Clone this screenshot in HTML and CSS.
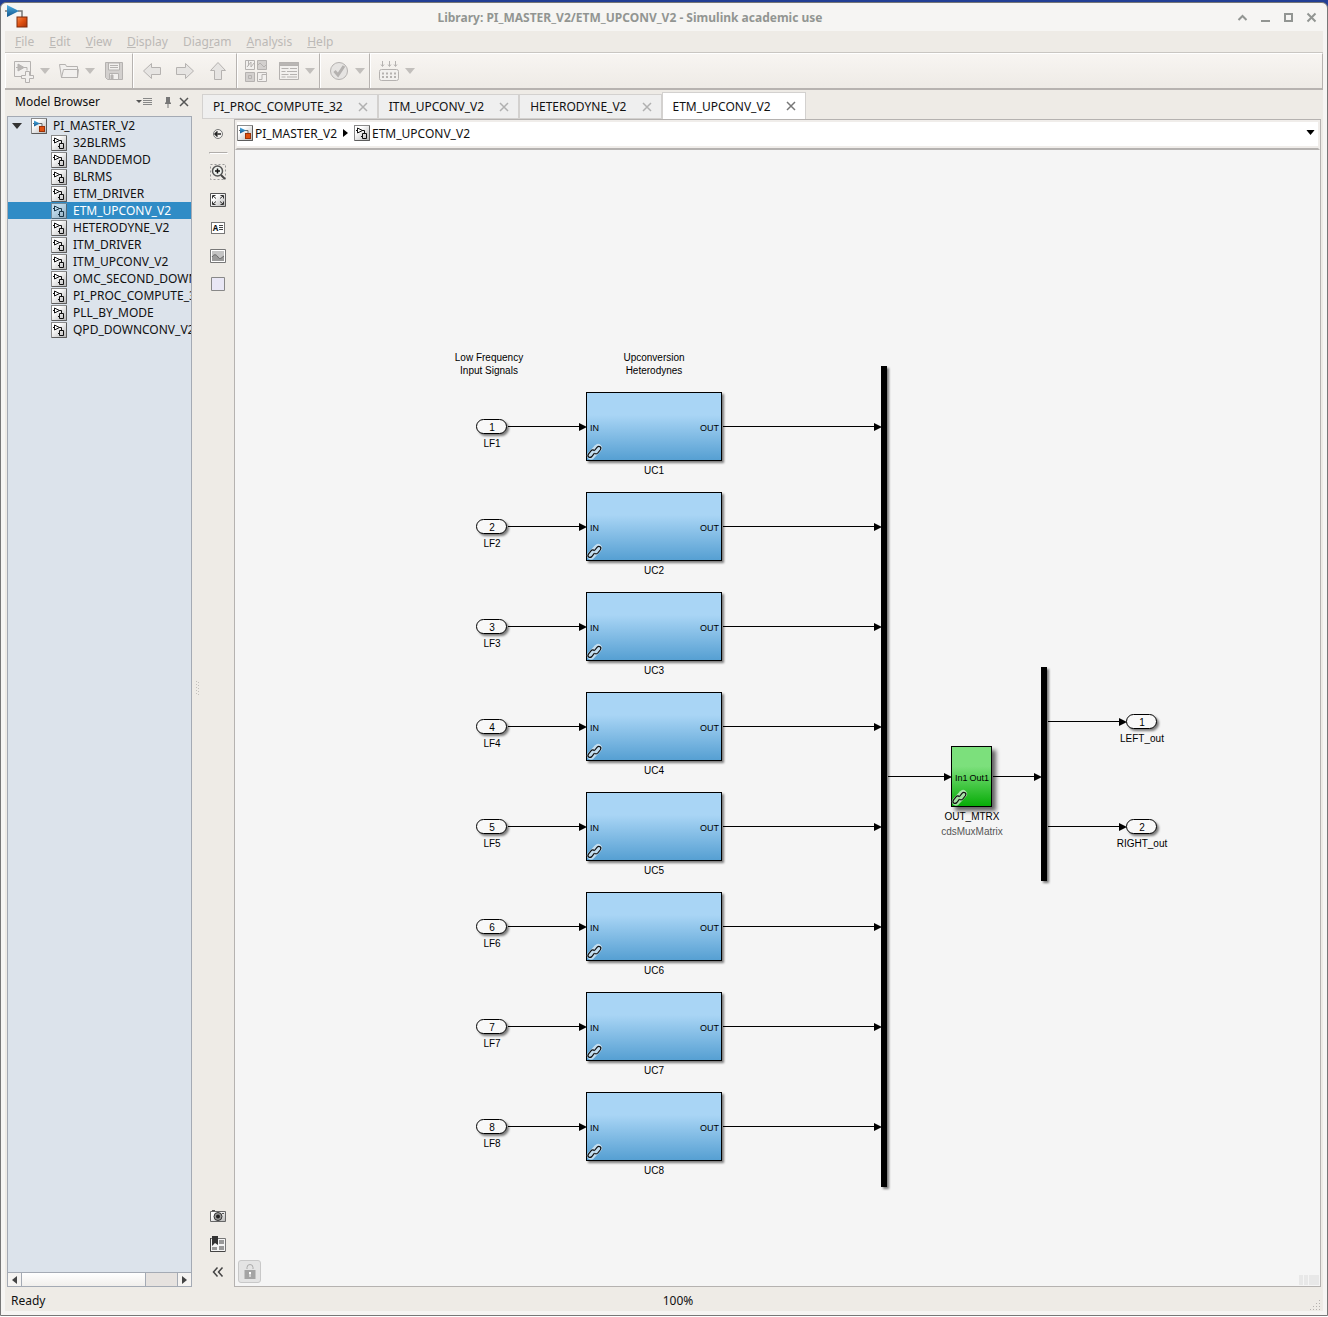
FILE: index.html
```html
<!DOCTYPE html>
<html lang="en">
<head>
    <meta charset="UTF-8">
    <meta name="viewport" content="width=device-width, initial-scale=1.0">
    <title>Library: PI_MASTER_V2/ETM_UPCONV_V2 - Simulink academic use</title>
    <link rel="stylesheet" href="styles.css">
</head>
<body>

    <!-- Shared icons -->
    <svg class="sprite" width="0" height="0" aria-hidden="true">
        <defs>
            <linearGradient id="tileFill" x1="0" y1="0" x2="1" y2="1">
                <stop offset="0.3" stop-color="#ffffff"/>
                <stop offset="1" stop-color="#b4b4b4"/>
            </linearGradient>
            <linearGradient id="orangeFill" x1="0" y1="0" x2="1" y2="1">
                <stop offset="0" stop-color="#f58a4a"/>
                <stop offset="0.5" stop-color="#e0500f"/>
                <stop offset="1" stop-color="#a83208"/>
            </linearGradient>
            <linearGradient id="triFill" x1="0" y1="0" x2="0" y2="1">
                <stop offset="0" stop-color="#4fb0e6"/>
                <stop offset="1" stop-color="#10558c"/>
            </linearGradient>
            <symbol id="modelIcon" viewBox="0 0 16 16">
                <rect x="0.5" y="0.5" width="15" height="15" fill="url(#tileFill)" stroke="#8a8a8a"/>
                <path d="M15.5 1v14.500H1" fill="none" stroke="#5c5c5c"/>
                <path d="M2 5.500h2M8 5.500h3v3" fill="none" stroke="#666"/>
                <path d="M3 2.500v6l6-3z" fill="url(#triFill)"/>
                <rect x="8.500" y="8.500" width="5" height="5" fill="#e0500f" stroke="#9a3208"/>
            </symbol>
            <symbol id="subsystemIcon" viewBox="0 0 16 16">
                <rect x="0.5" y="0.5" width="15" height="15" fill="url(#tileFill)" stroke="#8a8a8a"/>
                <path d="M15.5 1v14.500H1" fill="none" stroke="#5c5c5c"/>
                <path d="M2 5.500h2M8 5.500h2.500v3M3.500 3v5l5-2.500zM7 11.500h1.500M8.500 8.500h4v5h-4z" fill="none" stroke="#111"/>
            </symbol>
            <symbol id="closeIcon" viewBox="0 0 10 10">
                <path d="M1 1l8 8M9 1l-8 8" fill="none" stroke="currentColor" stroke-width="1.500"/>
            </symbol>
            <symbol id="downIcon" viewBox="0 0 10 6">
                <path d="M0 0h10l-5 6z" fill="currentColor"/>
            </symbol>
        </defs>
    </svg>

    <div class="window">
        <header class="titlebar">
            <svg class="app-icon" width="24" height="26" viewBox="0 0 24 26" aria-hidden="true">
                <path d="M0 7h3M13 7h4v7" fill="none" stroke="#777" stroke-width="1.500"/>
                <path d="M2 1v12l12-6z" fill="url(#triFill)"/>
                <rect x="12" y="13" width="10" height="10" fill="url(#orangeFill)" stroke="#7d2a0a"/>
            </svg>
            <h1>Library: PI_MASTER_V2/ETM_UPCONV_V2 - Simulink academic use</h1>
            <div class="window-buttons">
                <button type="button" aria-label="Shade"><svg width="11" height="11" viewBox="0 0 11 11"><path d="M1.500 8l4-4 4 4" /></svg></button>
                <button type="button" aria-label="Minimize"><svg width="11" height="11" viewBox="0 0 11 11"><path d="M1 9h9" /></svg></button>
                <button type="button" aria-label="Maximize"><svg width="11" height="11" viewBox="0 0 11 11"><path d="M2 2h7v7h-7z" /></svg></button>
                <button type="button" aria-label="Close"><svg width="11" height="11" viewBox="0 0 11 11"><path d="M1.500 1.500l8 8M9.500 1.500l-8 8" /></svg></button>
            </div>
        </header>

        <nav class="menubar">
            <a href="#"><u>F</u>ile</a>
            <a href="#"><u>E</u>dit</a>
            <a href="#"><u>V</u>iew</a>
            <a href="#"><u>D</u>isplay</a>
            <a href="#">Diag<u>r</u>am</a>
            <a href="#"><u>A</u>nalysis</a>
            <a href="#"><u>H</u>elp</a>
        </nav>

        <div class="toolbar">
            <div class="tool-group">
                <div class="split">
                    <button type="button" class="tool" aria-label="New model">
                        <svg width="24" height="24" viewBox="0 0 24 24"><path class="soft" d="M2.500 2.500h16v15h-16z"/><path d="M4 8.500h2M12 8.500h3v3"/><path class="dark" d="M6 5v7l6-3.500z"/><path class="soft" d="M13.500 12.500h4v4h4v3h-4v4h-4v-4h-4v-3h4z"/></svg>
                    </button>
                    <button type="button" class="arrow" aria-label="New options"><svg width="10" height="6"><use href="#downIcon"/></svg></button>
                </div>
                <div class="split">
                    <button type="button" class="tool" aria-label="Open">
                        <svg width="24" height="24" viewBox="0 0 24 24"><path class="soft" d="M4.500 18.500l-2-13h6l1 2h11v11zM4.500 18.500l2-8h15l-1 8z"/></svg>
                    </button>
                    <button type="button" class="arrow" aria-label="Open options"><svg width="10" height="6"><use href="#downIcon"/></svg></button>
                </div>
                <button type="button" class="tool" aria-label="Save">
                    <svg width="24" height="24" viewBox="0 0 24 24"><path class="deep" d="M3.500 3.500h17v17h-15l-2-2z"/><path class="soft" d="M6.500 4h11v7h-11zM7.500 14.500h9v6h-9z"/><path d="M8 6.500h8M8 8.500h8"/><path class="dark" d="M9 16h2v4h-2z"/></svg>
                </button>
            </div>
            <div class="tool-group">
                <button type="button" class="tool" aria-label="Back">
                    <svg width="24" height="24" viewBox="0 0 24 24"><path class="mid" d="M3.500 12l8-7.500v4h9v7h-9v4z"/></svg>
                </button>
                <button type="button" class="tool" aria-label="Forward">
                    <svg width="24" height="24" viewBox="0 0 24 24"><path class="mid" d="M20.500 12l-8-7.500v4h-9v7h9v4z"/></svg>
                </button>
                <button type="button" class="tool" aria-label="Up to parent">
                    <svg width="24" height="24" viewBox="0 0 24 24"><path class="mid" d="M12 3.500l7.500 8h-4v9h-7v-9h-4z"/></svg>
                </button>
            </div>
            <div class="tool-group">
                <button type="button" class="tool" aria-label="Library browser">
                    <svg width="24" height="24" viewBox="0 0 24 24"><path class="soft" d="M1.500 1.500h9v9h-9zM13.500 13.500h9v9h-9z"/><path class="deep" d="M13.500 1.500h9v9h-9zM1.500 13.500h9v9h-9z"/><path d="M4.500 2v5M3 8l4-5v5l3-4M14 6l2-2 4 4 2-2M4.500 16.500h3v3h-3zM15 20.500h3v-5h4"/></svg>
                </button>
                <div class="split">
                    <button type="button" class="tool" aria-label="Model configuration">
                        <svg width="24" height="24" viewBox="0 0 24 24"><path class="soft" d="M2.500 3.500h19v17h-19z"/><path class="dark" d="M2.500 3.500h19v3h-19z"/><path d="M4.500 9.500h7M13 9.500h7M4.500 12.500h4M10 12.500h10M4.500 15.500h7M13 15.500h7M4.500 18h4M10 18h10"/></svg>
                    </button>
                    <button type="button" class="arrow" aria-label="Configuration options"><svg width="10" height="6"><use href="#downIcon"/></svg></button>
                </div>
            </div>
            <div class="tool-group">
                <div class="split">
                    <button type="button" class="tool" aria-label="Check model">
                        <svg width="24" height="24" viewBox="0 0 24 24"><circle class="mid" cx="12" cy="12" r="8.500"/><path class="check" d="M7.500 12l3.500 4 6-9"/></svg>
                    </button>
                    <button type="button" class="arrow" aria-label="Check options"><svg width="10" height="6"><use href="#downIcon"/></svg></button>
                </div>
            </div>
            <div class="tool-group">
                <div class="split">
                    <button type="button" class="tool" aria-label="Build model">
                        <svg width="24" height="24" viewBox="0 0 24 24"><path d="M5.500 2v5M12.500 2v5M18.500 2v5M4 5.500l1.500 2 1.500-2M11 5.500l1.500 2 1.500-2M17 5.500l1.500 2 1.500-2"/><rect class="soft" x="2.500" y="10.500" width="19" height="11" rx="2"/><path stroke-dasharray="2 2" stroke-width="2" d="M5 14.500h14M5 18h14"/></svg>
                    </button>
                    <button type="button" class="arrow" aria-label="Build options"><svg width="10" height="6"><use href="#downIcon"/></svg></button>
                </div>
            </div>
        </div>

        <main class="workspace">
            <aside class="browser">
                <div class="browser-head">
                    <h2>Model Browser</h2>
                    <button type="button" class="options" aria-label="Browser options"><svg width="17" height="10" viewBox="0 0 17 10"><path d="M0 3h6l-3 3z" fill="#555"/><path d="M7 1.500h9M7 3.500h9M7 5.500h9M7 7.500h9" stroke="#888"/></svg></button>
                    <button type="button" aria-label="Pin"><svg width="8" height="12" viewBox="0 0 8 12"><path d="M2 1h4v5l1 1v1H1V7l1-1z" fill="#777"/><path d="M4 8v4" stroke="#777"/></svg></button>
                    <button type="button" aria-label="Close browser"><svg width="10" height="10"><use href="#closeIcon"/></svg></button>
                </div>
                <div class="tree-box">
                    <ul class="tree">
                        <li class="root"><svg class="twisty" width="10" height="6"><use href="#downIcon"/></svg><svg width="16" height="16"><use href="#modelIcon"/></svg><a href="#">PI_MASTER_V2</a></li>
                        <li><svg width="16" height="16"><use href="#subsystemIcon"/></svg><a href="#">32BLRMS</a></li>
                        <li><svg width="16" height="16"><use href="#subsystemIcon"/></svg><a href="#">BANDDEMOD</a></li>
                        <li><svg width="16" height="16"><use href="#subsystemIcon"/></svg><a href="#">BLRMS</a></li>
                        <li><svg width="16" height="16"><use href="#subsystemIcon"/></svg><a href="#">ETM_DRIVER</a></li>
                        <li class="selected"><svg width="16" height="16"><use href="#subsystemIcon"/></svg><a href="#">ETM_UPCONV_V2</a></li>
                        <li><svg width="16" height="16"><use href="#subsystemIcon"/></svg><a href="#">HETERODYNE_V2</a></li>
                        <li><svg width="16" height="16"><use href="#subsystemIcon"/></svg><a href="#">ITM_DRIVER</a></li>
                        <li><svg width="16" height="16"><use href="#subsystemIcon"/></svg><a href="#">ITM_UPCONV_V2</a></li>
                        <li><svg width="16" height="16"><use href="#subsystemIcon"/></svg><a href="#">OMC_SECOND_DOWN</a></li>
                        <li><svg width="16" height="16"><use href="#subsystemIcon"/></svg><a href="#">PI_PROC_COMPUTE_32</a></li>
                        <li><svg width="16" height="16"><use href="#subsystemIcon"/></svg><a href="#">PLL_BY_MODE</a></li>
                        <li><svg width="16" height="16"><use href="#subsystemIcon"/></svg><a href="#">QPD_DOWNCONV_V2</a></li>
                    </ul>
                    <div class="scrollbar">
                        <button type="button" aria-label="Scroll left"><svg width="5" height="8" viewBox="0 0 5 8"><path d="M5 0v8L0 4z"/></svg></button>
                        <div class="track"><div class="thumb"></div></div>
                        <button type="button" aria-label="Scroll right"><svg width="5" height="8" viewBox="0 0 5 8"><path d="M0 0v8l5-4z"/></svg></button>
                    </div>
                </div>
            </aside>

            <div class="splitter"><svg width="3" height="15" viewBox="0 0 3 15"><path d="M0.500 0v15M2.500 1v14" stroke="#c4c1bd" stroke-dasharray="1 2"/></svg></div>

            <section class="editor">
                <div class="tabs">
                    <div class="tab"><a href="#">PI_PROC_COMPUTE_32</a><button type="button" aria-label="Close PI_PROC_COMPUTE_32"><svg width="10" height="10"><use href="#closeIcon"/></svg></button></div>
                    <div class="tab"><a href="#">ITM_UPCONV_V2</a><button type="button" aria-label="Close ITM_UPCONV_V2"><svg width="10" height="10"><use href="#closeIcon"/></svg></button></div>
                    <div class="tab"><a href="#">HETERODYNE_V2</a><button type="button" aria-label="Close HETERODYNE_V2"><svg width="10" height="10"><use href="#closeIcon"/></svg></button></div>
                    <div class="tab active"><a href="#">ETM_UPCONV_V2</a><button type="button" aria-label="Close ETM_UPCONV_V2"><svg width="10" height="10"><use href="#closeIcon"/></svg></button></div>
                </div>

                <div class="editor-body">
                    <div class="palette">
                        <button type="button" aria-label="Hide explorer bar">
                            <svg width="12" height="12" viewBox="0 0 12 12"><circle cx="6" cy="6" r="4.500" fill="#f4f2ef" stroke="#777"/><path d="M3 6h6M5.500 3.500L3 6l2.500 2.500" fill="none" stroke="#222" stroke-width="1.500"/></svg>
                        </button>
                        <hr>
                        <button type="button" aria-label="Zoom">
                            <svg width="16" height="16" viewBox="0 0 16 16"><path d="M0.500 0.500h15v15h-15z" fill="none" stroke="#999" stroke-dasharray="2 2"/><circle cx="7.500" cy="7" r="5" fill="#eef2ee" stroke="#555" stroke-width="1.500"/><path d="M5 7h5M7.500 4.500v5" stroke="#111" stroke-width="1.500"/><path d="M11 11l4 4" stroke="#444" stroke-width="2"/></svg>
                        </button>
                        <button type="button" aria-label="Fit to view">
                            <svg width="16" height="14" viewBox="0 0 16 14"><path d="M0.500 0.500h15v13h-15z" fill="url(#tileFill)" stroke="#555"/><path d="M2.500 5.500v-3h3M10.500 2.500h3v3M13.500 8.500v3h-3M5.500 11.500h-3v-3M3 3l3 2.500M13 3l-3 2.500M3 11l3-2.500M13 11l-3-2.500" fill="none" stroke="#333"/></svg>
                        </button>
                        <button type="button" class="annotation" aria-label="Annotation"><b>A</b><svg width="4" height="6" viewBox="0 0 4 6"><path d="M0 0.500h4M0 2.500h4M0 4.500h4" stroke="#444"/></svg></button>
                        <button type="button" aria-label="Image">
                            <svg width="16" height="14" viewBox="0 0 16 14"><path d="M0.500 0.500h15v13h-15z" fill="#fff" stroke="#777"/><path d="M2 2h12v10H2z" fill="#c4c4c4"/><path d="M2 12V8c2-3 4-3 6 0s3 1 6-1v5z" fill="#9a9a9a"/><path d="M2 8c2-3 4-3 6 0s3 1 6-1" fill="none" stroke="#666"/></svg>
                        </button>
                        <button type="button" aria-label="Area">
                            <svg width="14" height="14" viewBox="0 0 14 14"><path d="M0.500 0.500h13v13h-13z" fill="#e9e7f5" stroke="#888"/></svg>
                        </button>
                        <span class="spacer"></span>
                        <button type="button" aria-label="Screenshot">
                            <svg width="16" height="12" viewBox="0 0 16 12"><path d="M2 0h3v2h-3z" fill="#555"/><path d="M0.500 1.500h15v10h-15z" fill="url(#tileFill)" stroke="#666"/><circle cx="8" cy="6.500" r="4" fill="#999" stroke="#333"/><circle cx="8" cy="6.500" r="2" fill="#222"/><path d="M12 3.500h2" stroke="#555"/></svg>
                        </button>
                        <button type="button" aria-label="Viewmarks">
                            <svg width="16" height="16" viewBox="0 0 16 16"><path d="M0.500 2.500h15v13h-15z" fill="#f4f4f4" stroke="#777"/><path d="M0.500 2v13.500H15" fill="none" stroke="#444"/><path d="M2 0h6v9l-3-2-3 3z" fill="#333"/><path d="M9 4h5v4H9zM9 10h5v4H9zM2 11h5v3H2z" fill="#999"/></svg>
                        </button>
                        <button type="button" aria-label="Collapse palette">
                            <svg width="12" height="10" viewBox="0 0 12 10"><path d="M5.500 0.500L1.500 5l4 4.500M10.500 0.500L6.500 5l4 4.500" fill="none" stroke="#444" stroke-width="1.500"/></svg>
                        </button>
                    </div>

                    <div class="viewer">
                        <div class="address">
                            <nav class="crumbs">
                                <svg width="16" height="16"><use href="#modelIcon"/></svg>
                                <a href="#">PI_MASTER_V2</a>
                                <svg class="next" width="5" height="8" viewBox="0 0 5 8"><path d="M0 0v8l5-4z"/></svg>
                                <svg width="16" height="16"><use href="#subsystemIcon"/></svg>
                                <a href="#">ETM_UPCONV_V2</a>
                            </nav>
                            <button type="button" aria-label="Show history"><svg width="9" height="5" viewBox="0 0 10 6"><use href="#downIcon" width="10" height="6"/></svg></button>
                        </div>

                        <div class="canvas">
                            <svg class="diagram" width="100%" height="100%">
                                <defs>
                                    <linearGradient id="blueFill" x1="0" y1="0" x2="0" y2="1">
                                        <stop offset="0.33" stop-color="#a9d5f5"/>
                                        <stop offset="1" stop-color="#559fd2"/>
                                    </linearGradient>
                                    <linearGradient id="greenFill" x1="0" y1="0" x2="0" y2="1">
                                        <stop offset="0.33" stop-color="#7ce07c"/>
                                        <stop offset="1" stop-color="#06ac06"/>
                                    </linearGradient>
                                    <g id="link">
                                        <path d="M5 13.500L12 6" stroke="#fff" stroke-opacity="0.6" stroke-width="8" stroke-linecap="round"/>
                                        <g fill="none" stroke="#111" stroke-width="1.200">
                                            <path d="M8.500 8.500l2.500-3.200c2-2.200 5.200 0 3.200 2.700l-2.400 3c-1 1.200-2.600 1.200-3.500 0"/>
                                            <path d="M8.300 11.300l-2.500 3.200c-2 2.200-5.200 0-3.200-2.700l2.400-3c1-1.200 2.600-1.200 3.500 0"/>
                                        </g>
                                    </g>
                                    <g id="port">
                                        <rect class="shape" x="-15" y="-7" width="30" height="14" rx="7"/>
                                    </g>
                                    <path id="head" d="M-8-4v8l8-4z"/>
                                    <!-- one input row: port, wire, heterodyne block, wire to the mux -->
                                    <g id="channel">
                                        <use href="#port" x="256.500" y="276.500"/>
                                        <path class="wire" d="M273 276.500h73M488 276.500h154"/>
                                        <use href="#head" x="352" y="277"/>
                                        <use href="#head" x="647" y="277"/>
                                        <rect class="shape" x="351.500" y="242.500" width="135" height="68" fill="url(#blueFill)"/>
                                        <use href="#link" x="351" y="292"/>
                                        <text class="port-text" x="355" y="281">IN</text>
                                        <text class="port-text end" x="484" y="281">OUT</text>
                                    </g>
                                </defs>

                                <g class="label">
                                    <text x="254" y="211">Low Frequency</text>
                                    <text x="254" y="224">Input Signals</text>
                                    <text x="419" y="211">Upconversion</text>
                                    <text x="419" y="224">Heterodynes</text>
                                </g>

                                <g class="label">
                                    <use href="#channel"/>
                                    <text x="257" y="281">1</text><text x="257" y="297">LF1</text><text x="419" y="324">UC1</text>
                                </g>
                                <g class="label" transform="translate(0 100)">
                                    <use href="#channel"/>
                                    <text x="257" y="281">2</text><text x="257" y="297">LF2</text><text x="419" y="324">UC2</text>
                                </g>
                                <g class="label" transform="translate(0 200)">
                                    <use href="#channel"/>
                                    <text x="257" y="281">3</text><text x="257" y="297">LF3</text><text x="419" y="324">UC3</text>
                                </g>
                                <g class="label" transform="translate(0 300)">
                                    <use href="#channel"/>
                                    <text x="257" y="281">4</text><text x="257" y="297">LF4</text><text x="419" y="324">UC4</text>
                                </g>
                                <g class="label" transform="translate(0 400)">
                                    <use href="#channel"/>
                                    <text x="257" y="281">5</text><text x="257" y="297">LF5</text><text x="419" y="324">UC5</text>
                                </g>
                                <g class="label" transform="translate(0 500)">
                                    <use href="#channel"/>
                                    <text x="257" y="281">6</text><text x="257" y="297">LF6</text><text x="419" y="324">UC6</text>
                                </g>
                                <g class="label" transform="translate(0 600)">
                                    <use href="#channel"/>
                                    <text x="257" y="281">7</text><text x="257" y="297">LF7</text><text x="419" y="324">UC7</text>
                                </g>
                                <g class="label" transform="translate(0 700)">
                                    <use href="#channel"/>
                                    <text x="257" y="281">8</text><text x="257" y="297">LF8</text><text x="419" y="324">UC8</text>
                                </g>

                                <!-- mux, output matrix, demux -->
                                <rect class="bar" x="646" y="216" width="6" height="821"/>
                                <path class="wire" d="M653 626.500h58M758 626.500h43"/>
                                <use href="#head" x="717" y="627"/>
                                <use href="#head" x="807" y="627"/>
                                <g class="label">
                                    <rect class="shape raised" x="716.500" y="596.500" width="40" height="60" fill="url(#greenFill)"/>
                                    <use href="#link" x="716" y="638"/>
                                    <text class="port-text" x="720" y="631">In1</text>
                                    <text class="port-text end" x="754" y="631">Out1</text>
                                    <text x="737" y="670">OUT_MTRX</text>
                                    <text class="muted" x="737" y="685">cdsMuxMatrix</text>
                                </g>
                                <rect class="bar" x="806" y="517" width="6" height="214"/>

                                <path class="wire" d="M813 571.500h73M813 676.500h73"/>
                                <use href="#head" x="892" y="572"/>
                                <use href="#head" x="892" y="677"/>
                                <g class="label">
                                    <use href="#port" x="906.500" y="571.500"/>
                                    <text x="907" y="576">1</text><text x="907" y="592">LEFT_out</text>
                                    <use href="#port" x="906.500" y="676.500"/>
                                    <text x="907" y="681">2</text><text x="907" y="697">RIGHT_out</text>
                                </g>
                            </svg>
                            <button type="button" class="lock" aria-label="Library is locked">
                                <svg width="12" height="15" viewBox="0 0 12 15"><path d="M3 5V3.500a3 3 0 0 1 6 0V5" fill="none" stroke="#aaa"/><path d="M0.500 6h11v9h-11z" fill="#a4a4a4"/><path d="M5 8h2v2h-.5v3h-1v-3H5z" fill="#fff"/></svg>
                            </button>
                            <div class="meter"><i></i><i></i><i class="wide"></i></div>
                        </div>
                    </div>
                </div>
            </section>
        </main>

        <footer class="statusbar">
            <span>Ready</span>
            <span class="zoom">100%</span>
            <svg class="grip" width="11" height="11" viewBox="0 0 11 11"><path d="M9 0h1v1h-1zM9 3h1v1h-1zM6 3h1v1h-1zM9 6h1v1h-1zM6 6h1v1h-1zM3 6h1v1h-1zM9 9h1v1h-1zM6 9h1v1h-1zM3 9h1v1h-1zM0 9h1v1h-1z"/></svg>
        </footer>
    </div>

</body>
</html>
```

FILE: styles.css
```css
* {
    box-sizing: border-box;
}
body {
    margin: 0;
    height: 100vh;
    padding: 2px 0 1px;
    background: linear-gradient(#223f95 10px, #ffffff 10px);
    font-family: "Noto Sans", sans-serif;
    font-size: 12px;
    line-height: 17px;
    color: #111;
}
.sprite {
    position: absolute;
}
h1, h2, ul {
    margin: 0;
    padding: 0;
    font-size: 12px;
}
a {
    color: inherit;
    text-decoration: none;
}
button {
    display: flex;
    align-items: center;
    justify-content: center;
    padding: 0;
    border: none;
    background: none;
    font: inherit;
    color: inherit;
}
svg {
    flex: none;
}

.window {
    display: flex;
    flex-direction: column;
    height: 100%;
    padding: 0 4px 4px;
    border: 1px solid #777;
    border-radius: 6px 6px 0 0;
    background: #f6f5f3;
}

/* Title bar */
.titlebar {
    display: flex;
    align-items: center;
    height: 28px;
    color: #929592;
}
.titlebar h1 {
    flex: 1;
    text-align: center;
}
.window-buttons {
    display: flex;
}
.window-buttons button {
    width: 23px;
    height: 28px;
}
.window-buttons path {
    fill: none;
    stroke: #929592;
    stroke-width: 2;
}

/* Menu */
.menubar {
    display: flex;
    gap: 15px;
    height: 21px;
    padding: 2px 10px;
    background: #eeebe6;
    color: #bcb9b6;
}

/* Toolbar */
.toolbar {
    display: flex;
    height: 38px;
    border-top: 1px solid #c9c6c2;
    border-bottom: 2px solid #b7b3b0;
    background: linear-gradient(#f8f5f2, #eeebe6);
}
.tool-group {
    display: flex;
    align-items: center;
    gap: 4px;
    padding: 0 6px;
    border-top: 1px solid #fff;
    border-left: 1px solid #fff;
    border-right: 1px solid #b7b3b0;
}
.tool-group:last-child {
    flex: 1;
}
.split {
    display: flex;
    gap: 1px;
}
.tool-group > .tool + * {
    margin-left: 5px;
}
.tool-group > .split:last-child {
    margin-right: -5px;
}
.tool {
    width: 24px;
    height: 24px;
}
.tool svg {
    fill: none;
    stroke: #b5b2b0;
}
.tool .soft {
    fill: #f2f0ee;
}
.tool .mid {
    fill: #e6e4e2;
}
.tool .deep {
    fill: #d3d0ce;
}
.tool .dark {
    fill: #b9b6b4;
}
.tool .check {
    stroke-width: 3;
}
.arrow {
    width: 16px;
    height: 24px;
    color: #c2bfbc;
}

/* Workspace */
.workspace {
    flex: 1;
    min-height: 0;
    display: flex;
    padding: 0 2px;
    background: #eeebe6;
}
.browser {
    width: 185px;
    display: flex;
    flex-direction: column;
}
.browser-head {
    display: flex;
    align-items: center;
    gap: 7px;
    height: 26px;
    padding: 0 3px 3px 8px;
    color: #555;
}
.browser-head h2 {
    flex: 1;
    font-weight: normal;
    color: #111;
}
.browser-head .options {
    margin-right: 4px;
}
.tree-box {
    flex: 1;
    display: flex;
    flex-direction: column;
    border: 1px solid #a4aab4;
    background: #dce3eb;
}
.tree {
    flex: 1;
    overflow: hidden;
    list-style: none;
}
.tree li {
    display: flex;
    align-items: center;
    gap: 6px;
    height: 17px;
    padding-left: 43px;
    white-space: nowrap;
}
.tree .root {
    padding-left: 4px;
}
.twisty {
    margin-right: 3px;
    color: #333;
}
.tree .selected {
    background: #308cc6;
    color: #fff;
}
.selected svg {
    opacity: 0.7;
}
.scrollbar {
    display: flex;
    height: 14px;
    border-top: 1px solid #a4aab4;
}
.scrollbar button {
    width: 13px;
    background: #f6f4f2;
    fill: #444;
}
.track {
    flex: 1;
    border: solid #a4aab4;
    border-width: 0 1px;
    background: #e6e2df;
}
.thumb {
    width: 80%;
    height: 100%;
    border-right: 1px solid #a4aab4;
    background: linear-gradient(#fff, #f1efec);
}
.splitter {
    width: 10px;
    display: flex;
    align-items: center;
    justify-content: center;
}

/* Editor */
.editor {
    flex: 1;
    min-width: 0;
    display: flex;
    flex-direction: column;
}
.tabs {
    display: flex;
    align-items: flex-end;
    height: 29px;
}
.tab {
    display: flex;
    align-items: center;
    gap: 10px;
    height: 25px;
    padding: 0 4px 0 10px;
    border: 1px solid #d3d1cf;
    background: #efefef;
}
.tab button {
    width: 20px;
    height: 20px;
    color: #b0b0b0;
}
.tab.active {
    height: 27px;
    border-bottom: none;
    background: #fff;
}
.tab.active button {
    color: #777;
}
.editor-body {
    flex: 1;
    min-height: 0;
    display: flex;
}
.palette {
    width: 32px;
    display: flex;
    flex-direction: column;
    align-items: center;
    padding: 1px 0;
}
.palette button {
    width: 28px;
    height: 28px;
}
.palette hr {
    width: 19px;
    margin: 4px 0;
    border: 1px solid;
    border-color: #b0adaa #fff #fff #b0adaa;
}
.spacer {
    flex: 1;
}
.palette .annotation {
    width: 14px;
    height: 12px;
    margin: 8px 0;
    gap: 1px;
    border: 1px solid #777;
    background: #fff;
    font-size: 8px;
    line-height: 10px;
}
.viewer {
    flex: 1;
    min-width: 0;
    display: flex;
    flex-direction: column;
    border: 1px solid #b5b2b0;
}
.address {
    display: flex;
    height: 30px;
    border: 2px solid #f0edea;
    border-bottom: 2px solid #b5b2b0;
    background: #fff;
    box-shadow: inset 0 -2px #f0edea;
}
.crumbs {
    flex: 1;
    display: flex;
    align-items: center;
    gap: 2px;
    padding-bottom: 4px;
}
.crumbs .next {
    margin: 0 4px;
}
.address button {
    width: 16px;
    padding-bottom: 5px;
    color: #000;
}

/* Canvas */
.canvas {
    flex: 1;
    min-height: 0;
    position: relative;
    background: #f5f5f5;
    overflow: hidden;
}
.diagram {
    display: block;
    font-family: "Liberation Sans", sans-serif;
    font-size: 10px;
}
.shape {
    stroke: #000;
    filter: drop-shadow(2px 2px 1px rgba(0, 0, 0, 0.5));
}
#port .shape {
    fill: #f8f8f8;
}
.raised {
    filter: drop-shadow(4px 4px 2px rgba(0, 0, 0, 0.6));
}
.bar {
    filter: drop-shadow(2px 2px 1px rgba(0, 0, 0, 0.5));
}
.wire {
    stroke: #000;
}
.label text {
    text-anchor: middle;
}
.label .muted {
    fill: #555;
}
.diagram .port-text {
    font-size: 9px;
    text-anchor: start;
}
.diagram .end {
    text-anchor: end;
}
.lock {
    position: absolute;
    left: 3px;
    bottom: 3px;
    width: 23px;
    height: 23px;
    border: 1px solid #c8c8c8;
    border-radius: 3px;
    background: #e4e4e4;
}
.meter {
    position: absolute;
    right: 1px;
    bottom: 1px;
    display: flex;
    gap: 1px;
}
.meter i {
    width: 4px;
    height: 10px;
    background: #e8e8e8;
}
.meter .wide {
    width: 10px;
}

/* Status bar */
.statusbar {
    display: grid;
    grid-template-columns: 1fr auto 1fr;
    align-items: center;
    height: 24px;
    padding: 2px 2px 0 6px;
    background: #eeebe6;
}
.statusbar .zoom {
    padding-left: 24px;
}
.grip {
    justify-self: end;
    align-self: end;
    fill: #b5b2af;
}
```
